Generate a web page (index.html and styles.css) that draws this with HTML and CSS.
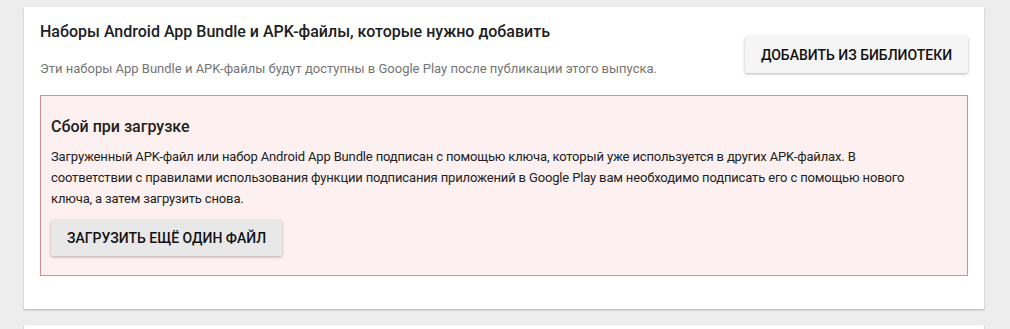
FILE: index.html
```html
<!DOCTYPE html>
<html lang="ru">
<head>
    <meta charset="UTF-8">
    <title>Наборы App Bundle и APK-файлы</title>
    <link rel="stylesheet" href="styles.css">
</head>
<body>

<div class="card">
    <div class="card-header">
        <div class="card-text">
            <h2 class="card-title">Наборы Android App Bundle и APK-файлы, которые нужно добавить</h2>
            <p class="card-subtitle">Эти наборы App Bundle и APK-файлы будут доступны в Google Play после публикации этого выпуска.</p>
        </div>
        <button class="btn btn-light">Добавить из библиотеки</button>
    </div>

    <!-- Error block -->
    <div class="error-box">
        <h3 class="error-title">Сбой при загрузке</h3>
        <p class="error-text">Загруженный APK-файл или набор Android App Bundle подписан с помощью ключа, который уже используется в других APK-файлах. В соответствии с правилами использования функции подписания приложений в Google Play вам необходимо подписать его с помощью нового ключа, а затем загрузить снова.</p>
        <button class="btn btn-grey">Загрузить ещё один файл</button>
    </div>
</div>

<div class="card card-next"></div>

</body>
</html>
```

FILE: styles.css
```css
body {
    font-family: Roboto, "Noto Sans", Arial, sans-serif;
    background-color: #ededed;
    margin: 0;
    padding: 7px 26px 0 24px;
    color: #212121;
    overflow: hidden;
}
.card {
    background-color: #fff;
    padding: 13px 16px 33px 16px;
    box-shadow: 0 1px 2px rgba(0,0,0,0.25);
}
.card-next {
    margin-top: 16px;
    height: 40px;
    padding: 0;
}
.card-header {
    display: flex;
    justify-content: space-between;
    align-items: flex-start;
}
.card-title {
    font-size: 16px;
    font-weight: 500;
    line-height: 24px;
    margin: 0;
}
.card-subtitle {
    font-size: 13px;
    line-height: 20px;
    color: #757575;
    margin: 15px 0 0 0;
}
.btn {
    font-family: Roboto, "Noto Sans", Arial, sans-serif;
    font-size: 14px;
    font-weight: 500;
    text-transform: uppercase;
    white-space: nowrap;
    color: #111;
    border: none;
    border-radius: 2px;
    padding: 0;
    cursor: pointer;
    box-shadow: 0 1px 3px rgba(0,0,0,0.3);
}
.btn-light {
    background-color: #f5f5f5;
    height: 37px;
    width: 223px;
    margin-top: 16px;
}
.btn-grey {
    background-color: #e8e8e8;
    height: 36px;
    width: 231px;
    margin-top: 11px;
}
.error-box {
    margin-top: 16px;
    border: 1px solid #dc8c8c;
    background-color: #fcf0f0;
    padding: 19px 40px 19px 10px;
}
.error-title {
    font-size: 16px;
    font-weight: 500;
    line-height: 24px;
    margin: 0;
}
.error-text {
    font-size: 13px;
    line-height: 21px;
    letter-spacing: -0.15px;
    margin: 7px 0 0 0;
}
```
